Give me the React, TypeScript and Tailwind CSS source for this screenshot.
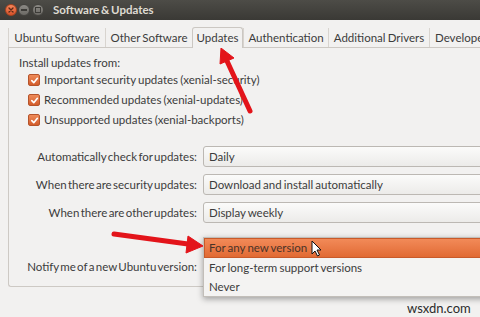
import React from 'react';

const tabs = [
  { label: 'Ubuntu Software', w: 'w-[97px]' },
  { label: 'Other Software', w: 'w-[87px]' },
  { label: 'Updates', w: 'w-[51px]', active: true },
  { label: 'Authentication', w: 'w-[85px]' },
  { label: 'Additional Drivers', w: 'w-[101px]' },
  { label: 'Developer Options', w: 'w-[120px]' },
];

const sources = [
  'Important security updates (xenial-security)',
  'Recommended updates (xenial-updates)',
  'Unsupported updates (xenial-backports)',
];

function CheckBox() {
  return (
    <div className="w-[12px] h-[12px] rounded-[2px] border border-[#b5532a] bg-gradient-to-b from-[#ee8a58] to-[#d35c2a] flex items-center justify-center">
      <svg width="9" height="9" viewBox="0 0 10 10" fill="none" stroke="white" strokeWidth="1.8" strokeLinecap="round" strokeLinejoin="round">
        <path d="M2 5.2 L4.2 7.4 L8.2 2.6" />
      </svg>
    </div>
  );
}

function Combo({ value }: { value?: string }) {
  return (
    <div className="w-[290px] h-[21px] flex items-center pl-[5px] rounded-[3px] border border-[#bcb8b3] bg-gradient-to-b from-[#fbfbfa] to-[#ecebe9] text-[#3c3c3c] whitespace-nowrap">
      {value}
    </div>
  );
}

function Row({ label, value, className = '' }: { label: string; value?: string; className?: string }) {
  return (
    <div className={`flex items-center ${className}`}>
      <div className="w-[178px] shrink-0 text-right whitespace-nowrap [word-spacing:-1.6px]">{label}</div>
      <div className="ml-[6px] shrink-0">
        <Combo value={value} />
      </div>
    </div>
  );
}

export default function App() {
  return (
    <div className="relative w-[480px] h-[317px] overflow-hidden bg-[#f2f1f0] font-[Lato,sans-serif] text-[11.5px] text-[#3c3c3c] [word-spacing:-0.8px]">
      {/* title bar */}
      <div className="h-[20px] flex items-center bg-gradient-to-b from-[#4d4c47] to-[#3a3935]">
        <div className="flex items-center pl-[5px]">
          <div className="w-[12px] h-[12px] rounded-full bg-gradient-to-b from-[#f5865a] to-[#d8522a] border border-[#a8431f] flex items-center justify-center">
            <svg width="6" height="6" viewBox="0 0 6 6" stroke="#5a2a18" strokeWidth="1.3" strokeLinecap="round">
              <path d="M1 1 L5 5 M5 1 L1 5" />
            </svg>
          </div>
          <div className="ml-[1px] w-[12px] h-[12px] rounded-full bg-gradient-to-b from-[#8c8a85] to-[#6b6964] border border-[#44433f] flex items-center justify-center">
            <div className="w-[6px] h-[1.5px] bg-[#3c3b37]" />
          </div>
          <div className="ml-[2px] w-[12px] h-[12px] rounded-full bg-gradient-to-b from-[#8c8a85] to-[#6b6964] border border-[#44433f] flex items-center justify-center">
            <div className="w-[6px] h-[6px] border border-[#3c3b37]" />
          </div>
        </div>
        <span className="ml-[9px] font-bold text-[11.5px] text-[#dfdbd2] [word-spacing:-1px]">Software &amp; Updates</span>
      </div>

      {/* tabs */}
      <div className="mt-[7px] pl-[8px] flex items-end h-[20px] relative z-10">
        {tabs.map((t) =>
          t.active ? (
            <div
              key={t.label}
              className={`${t.w} shrink-0 h-[21px] -mb-[1px] flex items-center justify-center border border-b-0 border-[#cbc7c2] rounded-t-[3px] bg-[#f2f1f0]`}
            >
              {t.label}
            </div>
          ) : (
            <div
              key={t.label}
              className={`${t.w} shrink-0 h-[19px] flex items-center justify-center border-l border-[#d8d4cf] last:justify-start last:pl-[5px] whitespace-nowrap`}
            >
              {t.label}
            </div>
          ),
        )}
      </div>

      {/* panel */}
      <div className="ml-[8px] w-[480px] h-[240px] border-l border-t border-b border-[#cdc9c4] rounded-bl-[3px] pl-[10px] pt-[7px]">
        <div className="leading-[15px]">Install updates from:</div>
        <div className="pl-[9px]">
          {sources.map((s) => (
            <div key={s} className="h-[20px] flex items-center gap-[4px] whitespace-nowrap">
              <CheckBox />
              <span>{s}</span>
            </div>
          ))}
        </div>
        <div className="mt-[16px] flex flex-col gap-[7px]">
          <Row label="Automatically check for updates:" value="Daily" />
          <Row label="When there are security updates:" value="Download and install automatically" />
          <Row label="When there are other updates:" value="Display weekly" />
          {/* combo value is hidden under the open popup */}
          <Row className="mt-[26px]" label="Notify me of a new Ubuntu version:" />
        </div>
      </div>

      {/* open combo popup */}
      <div className="absolute left-[203px] top-[237px] w-[290px] bg-[#f4f3f2] border border-[#c2beb9] shadow-[0_2px_6px_rgba(0,0,0,0.35)]">
        <div className="h-[20px] flex items-center pl-[4px] bg-gradient-to-b from-[#f28a58] to-[#e16a33] border border-[#c85a2a] text-[#4a3328]">
          For any new version
        </div>
        <div className="h-[19px] flex items-center pl-[5px]">For long-term support versions</div>
        <div className="h-[19px] flex items-center pl-[5px]">Never</div>
      </div>

      {/* annotations */}
      <svg className="absolute inset-0 pointer-events-none" width="480" height="317" viewBox="0 0 480 317">
        <g fill="#e3141a" stroke="#e3141a">
          <line x1="250" y1="111" x2="227" y2="61" strokeWidth="5" strokeLinecap="round" />
          <polygon points="221,48 234,58 220,64" strokeWidth="1" strokeLinejoin="round" />
          <line x1="114" y1="234" x2="188" y2="244" strokeWidth="5" strokeLinecap="round" />
          <polygon points="203,246 188,236 186,253" strokeWidth="1" strokeLinejoin="round" />
        </g>
        <path d="M312 241 L312 254 L315 251 L317.5 256 L319.5 255 L317 250 L321 250 Z" fill="white" stroke="#111" strokeWidth="1" strokeLinejoin="round" />
      </svg>

      <div className="absolute left-[407px] top-[299px] text-[13px] text-[#2b2b2b] [word-spacing:0px]">wsxdn.com</div>
    </div>
  );
}
